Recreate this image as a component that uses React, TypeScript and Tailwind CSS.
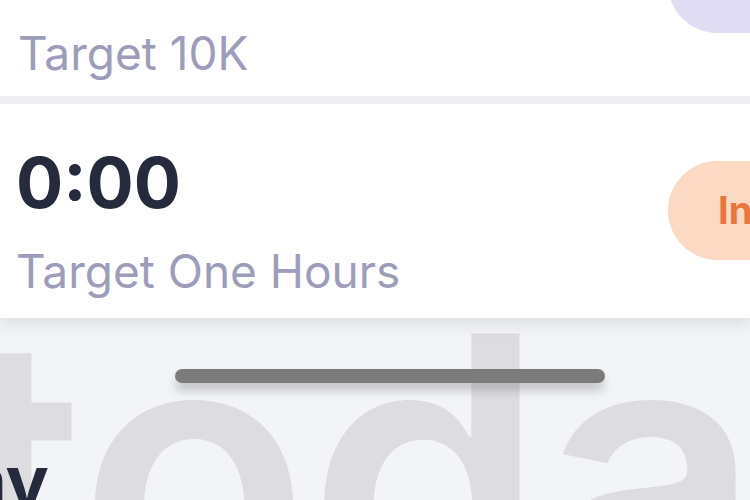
export default function App() {
  return (
    <div className="relative w-[750px] h-[500px] overflow-hidden bg-[#f3f4f8] font-['Inter',sans-serif]">
      {/* steps card */}
      <div className="flex bg-white h-[96px]">
        <div className="flex-1 pl-[18px] pt-[26px]">
          <p className="text-[46px] leading-[54px] text-[#9d9dbb]">Target 10K</p>
        </div>
        <div className="shrink-0 w-[200px] h-[99px] mt-[-66px] mr-[-118px] rounded-full bg-[#e0dcf3]" />
      </div>

      <div className="h-[8px] bg-[#efeff2]" />

      {/* duration card */}
      <div className="relative z-10 flex items-start bg-white h-[214px] shadow-[0_8px_14px_rgba(0,0,0,0.08)]">
        <div className="flex-1 pl-[16px] pt-[37px]">
          <p className="text-[70px] leading-[84px] font-bold text-[#262a3d]">0:00</p>
          <p className="mt-[19px] text-[46px] leading-[54px] text-[#9d9dbb]">Target One Hours</p>
        </div>
        <div className="shrink-0 flex items-center w-[200px] h-[99px] mt-[57px] mr-[-118px] pl-[50px] rounded-full bg-[#fcd9c2]">
          <span className="text-[38px] font-bold text-[#e8783a]">Incomplete</span>
        </div>
      </div>

      {/* today section */}
      <div className="relative flex flex-col h-[182px]">
        <span className="absolute left-[-50px] top-[-36px] text-[380px] leading-none font-semibold tracking-[-2px] text-[#dddddf] select-none whitespace-nowrap">
          today
        </span>
        <p className="relative ml-[-167px] mt-[127px] text-[72px] leading-none font-bold text-[#262a3d] whitespace-nowrap">
          Today
        </p>
        <div className="absolute left-[175px] top-[51px] w-[430px] h-[14px] rounded-full bg-[#7b7b7b] shadow-[0_8px_10px_rgba(0,0,0,0.18)]" />
      </div>
    </div>
  );
}
